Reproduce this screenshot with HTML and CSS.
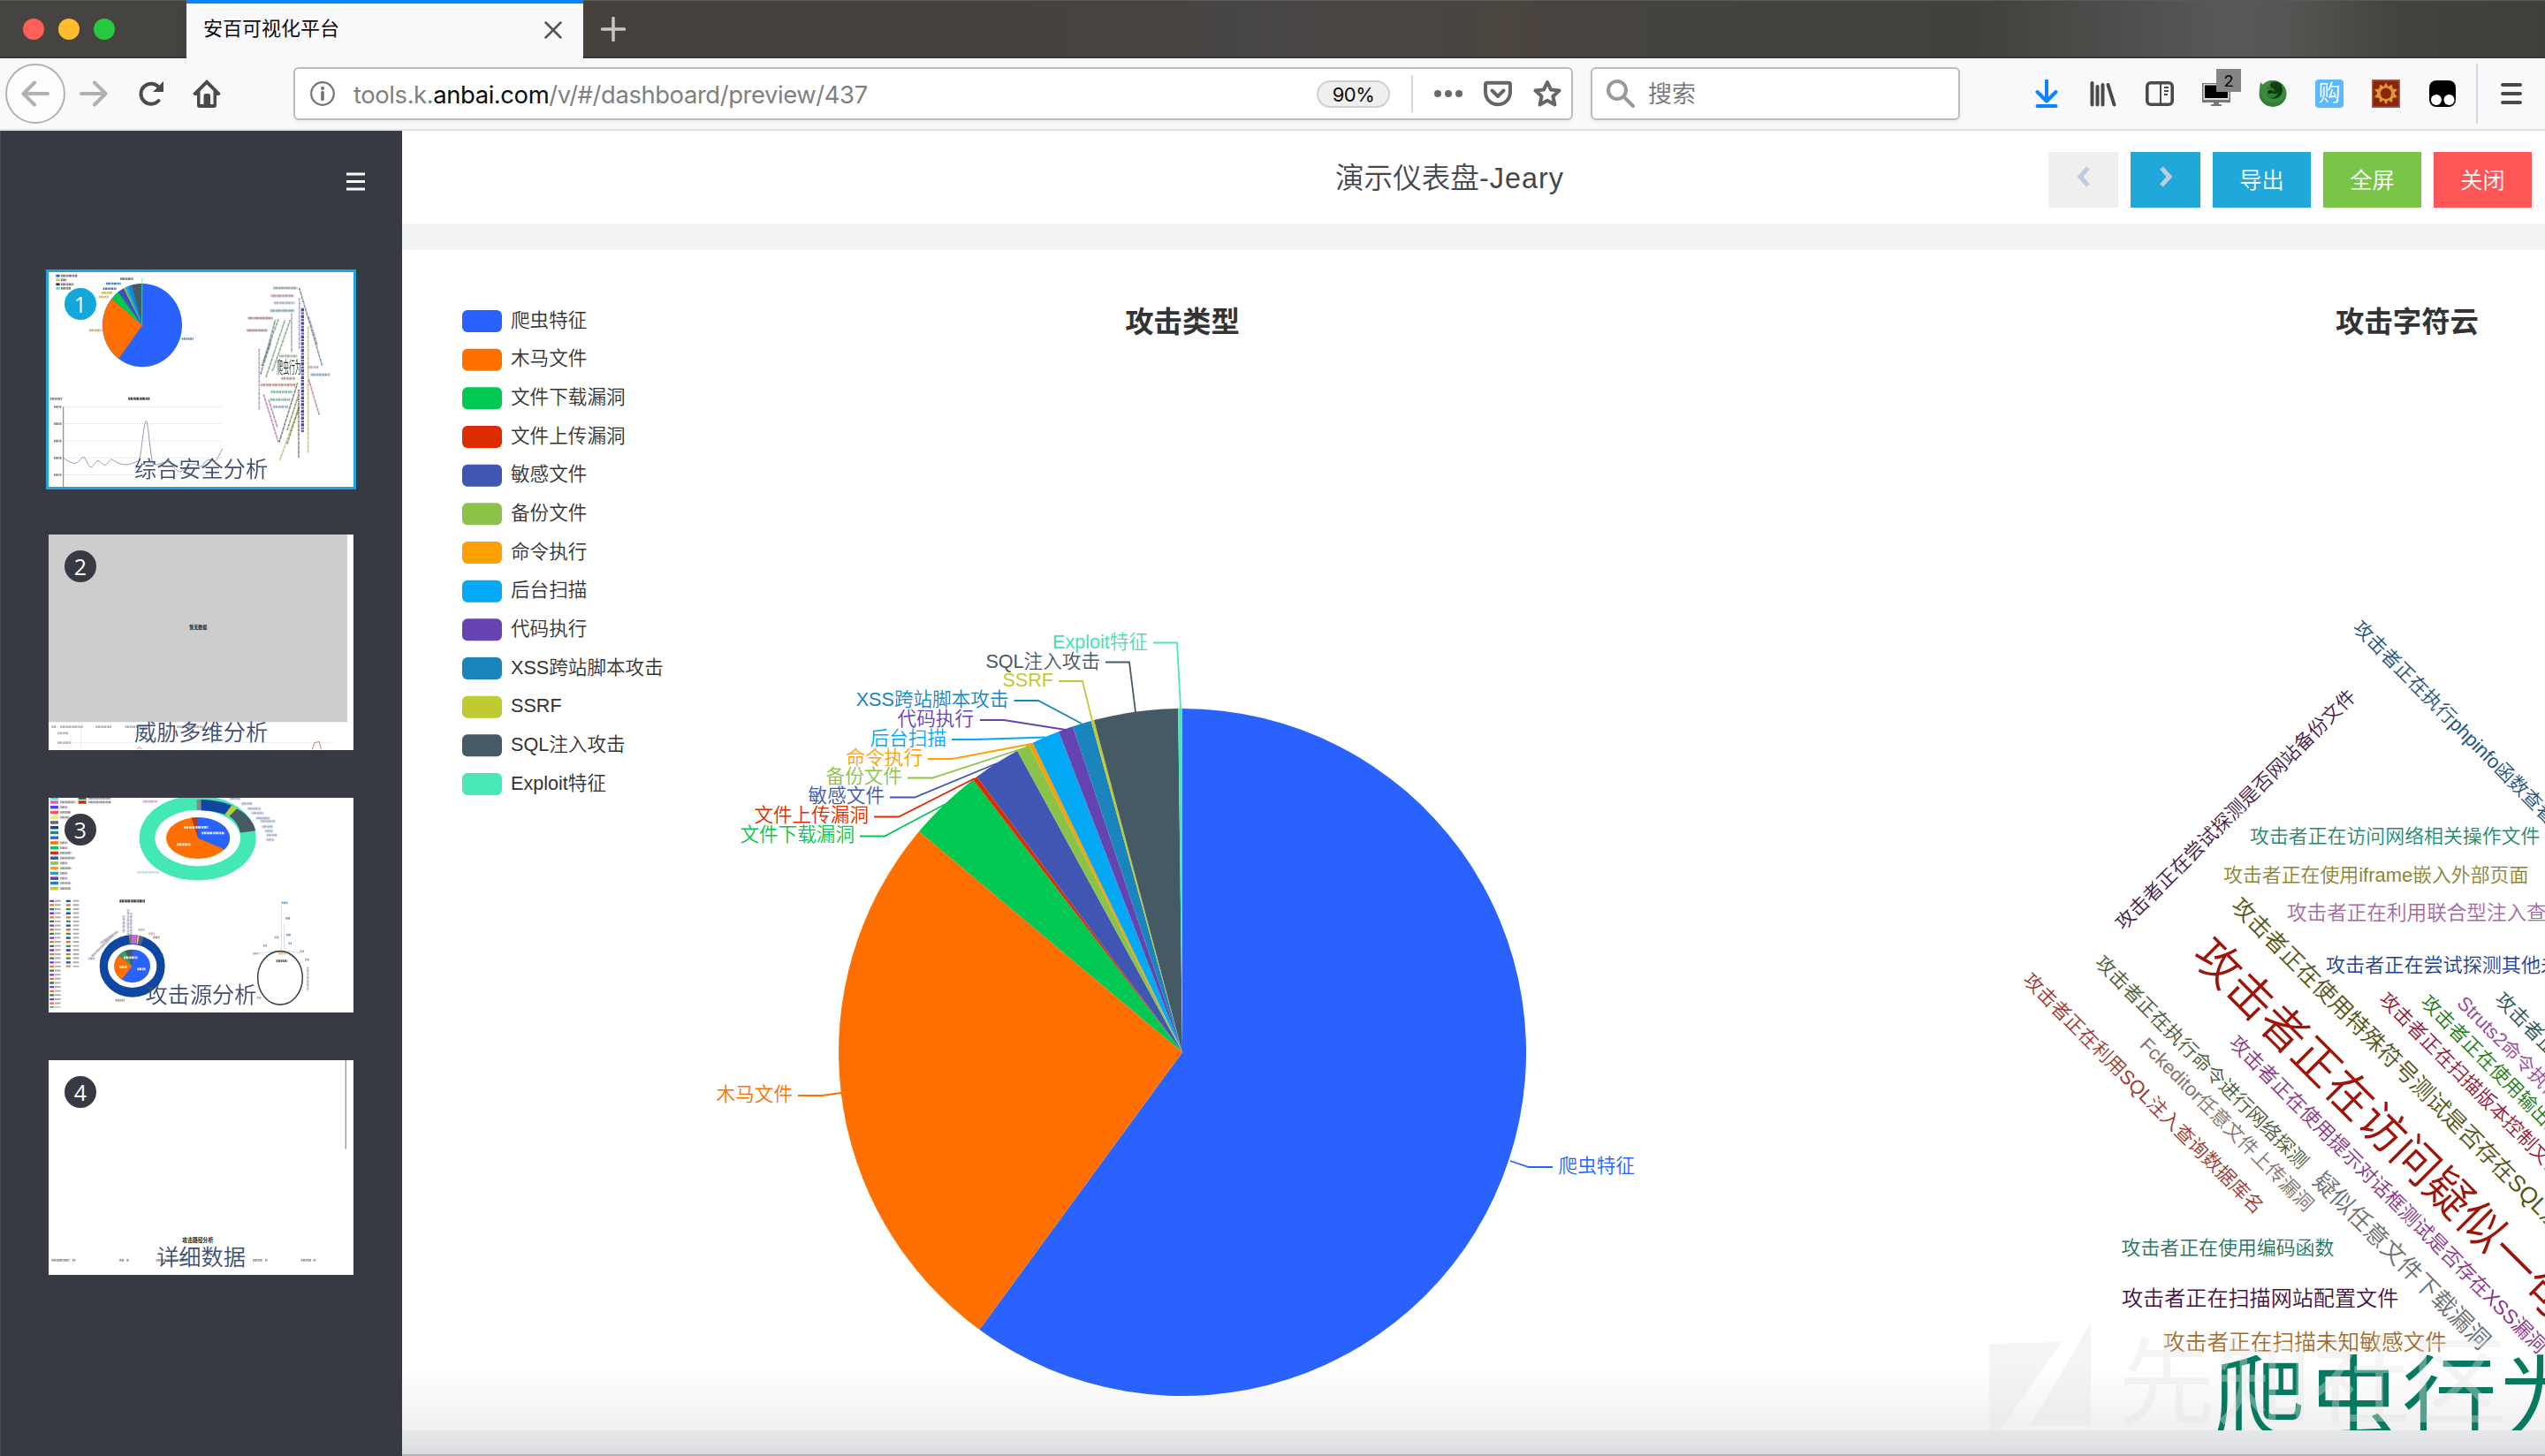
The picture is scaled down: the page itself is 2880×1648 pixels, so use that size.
FILE: index.html
```html
<!DOCTYPE html>
<html lang="zh-CN">
<head>
<meta charset="utf-8">
<title>安百可视化平台</title>
<link rel="stylesheet" href="styles.css">
</head>
<body>
<div class="window">
  <div class="tabbar">
    <div class="lights"><i class="red"></i><i class="yellow"></i><i class="green"></i></div>
    <div class="tab">
      <span class="tab-title">安百可视化平台</span>
      <svg class="tab-close" viewBox="0 0 20 20"><path d="M1.500 1.500L18.500 18.500M18.500 1.500L1.500 18.500"/></svg>
    </div>
    <svg class="new-tab" viewBox="0 0 28 28"><path d="M14 1.500V26.500M1.500 14H26.500"/></svg>
  </div>

  <div class="toolbar">
    <div class="back"><svg viewBox="0 0 32 32"><path d="M30 16H3M15 3.500L2.500 16L15 28.500"/></svg></div>
    <svg class="nav forward" viewBox="0 0 32 32"><path d="M2 16H29M17 3.500L29.500 16L17 28.500"/></svg>
    <svg class="nav reload" viewBox="0 0 32 32"><path d="M24.500 24A11.500 11.500 0 1 1 24.500 8.500L27 11"/><path class="solid" d="M30 2V14H18Z"/></svg>
    <svg class="nav home" viewBox="0 0 32 32"><path class="solid" fill-rule="evenodd" d="M16 0L31 15Q32.500 18 29 18H27V29Q27 32 24 32H8Q5 32 5 29V18H3Q-.5 18 1 15ZM16 5.500L8.500 13V28H12.500V18Q12.500 16 14.500 16H18Q20 16 20 18V28H23.500V13Z"/><circle class="solid" cx="17.300" cy="23" r="1.500"/></svg>
    <div class="urlbar">
      <svg class="info" viewBox="0 0 28 28"><circle cx="14" cy="14" r="12.800"/><path d="M14 12.500V20.500"/><circle class="dot" cx="14" cy="8" r="2"/></svg>
      <span class="url">tools.k.<b>anbai.com</b>/v/#/dashboard/preview/437</span>
      <span class="zoom">90%</span>
      <i class="url-sep"></i>
      <svg class="dots" viewBox="0 0 32 32"><circle cx="4" cy="16" r="4"/><circle cx="16" cy="16" r="4"/><circle cx="28" cy="16" r="4"/></svg>
      <svg class="pocket" viewBox="0 0 32 32"><path d="M4 3.800H28Q30 3.800 30 6V14C30 22 24 28.200 16 28.200S2 22 2 14V6Q2 3.800 4 3.800Z"/><path d="M9.500 12.500L16 19L22.500 12.500"/></svg>
      <svg class="star" viewBox="0 0 32 32"><path d="M16 3L20 11.600L29.500 12.600L22.400 19L24.500 28.600L16 23.800L7.500 28.600L9.600 19L2.500 12.600L12 11.600Z"/></svg>
    </div>
    <div class="search">
      <svg viewBox="0 0 32 32"><circle cx="12" cy="12" r="10"/><path d="M19.500 19.500L30 30"/></svg>
      <span>搜索</span>
    </div>
    <div class="extensions">
      <svg class="download" viewBox="0 0 32 32"><path d="M16 1.500V24M5.500 14L16 24.500L26.500 14M5.500 30H26.500"/></svg>
      <svg class="library" viewBox="0 0 32 32"><path d="M3.500 4V28.500M9.500 8V28.500M15.500 6V28.500M21.500 6L28.500 28.500"/></svg>
      <svg class="sidebar-icon" viewBox="0 0 32 32"><rect x="1.800" y="3.800" width="28.400" height="24.400" rx="4"/><path d="M17 4V28"/><path class="thin" d="M21 9H26M21 13H26M21 17H25"/></svg>
      <div class="monitor">
        <svg viewBox="0 0 32 32"><rect x="0" y="4" width="32" height="22" fill="#777"/><rect x="1.500" y="5" width="29" height="18" fill="#ddd"/><rect x="3" y="6.500" width="26" height="14.500" fill="#000"/><path d="M13 26H19V28H22V30H10V28H13Z" fill="#777"/></svg>
        <span class="badge">2</span>
      </div>
      <svg viewBox="0 0 32 32"><ellipse cx="16" cy="16" rx="15.500" ry="15" fill="#2f7f33"/><path d="M1 10L2 3L5 6Q9 1 16 1Q12 3 13 6Q9 8 8 11L13 12Q11 15 8 15Q9 21 15 22Q24 23 27 14Q28 9 26 5Q31 10 31 16Q28 25 19 26Q9 27 4 20Q0 15 1 10Z" fill="#3d8a3e"/><path d="M13 5Q18 0 25 5Q29 12 25 18Q20 23 14 21Q20 20 22 15Q17 18 14 14Q17 14 18 11Q15 10 13 8Z" fill="#123d14"/><path d="M10 13Q14 11 16 13Q15 16 11 16Z" fill="#0b260d"/></svg>
      <span class="gou">购</span>
      <svg viewBox="0 0 32 32"><rect x=".75" y=".75" width="30.500" height="30.500" fill="#8c240c" stroke="#a8604f" stroke-width="1.500"/><path d="M16 3.500L18.500 8L23 5.500L23.500 10.500L29 11L25.500 15.500L29 20L23.500 21L23 26L18.500 23.500L16 28.500L13.500 23.500L9 26L8.500 21L3 20L6.500 15.500L3 11L8.500 10.500L9 5.500L13.500 8Z" fill="#dd9838"/><circle cx="16" cy="15.800" r="6.200" fill="#8c240c"/></svg>
      <svg viewBox="0 0 32 32"><rect x="1" y="1" width="30" height="30" rx="8" fill="#000"/><circle cx="9" cy="23" r="6" fill="#fff"/><circle cx="23.500" cy="23" r="6" fill="#fff"/></svg>
    </div>
    <i class="bar-sep"></i>
    <svg class="menu" viewBox="0 0 24 24"><path d="M2 2H22M2 12H22M2 22H22"/></svg>
  </div>

  <div class="app">
    <aside class="side">
      <svg class="collapse" viewBox="0 0 21 21"><path d="M0 2H21M0 10.500H21M0 19H21"/></svg>
      <div class="thumbs">
        <div class="thumb active">
          <svg viewBox="165 73 1035 635" preserveAspectRatio="none">
            <g class="mini-legend"><path stroke="#2a5bd0" d="M190 84H203"/><path stroke="#bdc832" d="M190 96H203"/><path stroke="#333" d="M190 109H203"/><path stroke="#49e8b8" d="M190 121H203"/><path class="scribble" stroke="#666" d="M207 84H262M207 96H226M207 109H250M207 121H240M408 93H452"/><path stroke="#26a" class="scribble" d="M360 107H410M350 122H395"/><path stroke="#ca4" class="scribble" d="M345 134H380M335 146H368"/></g>
            <ellipse cx="483" cy="230" rx="135" ry="123" fill="#2962ff"/>
            <path fill="#ff6f00" d="M483 230L403 329A135 123 0 0 1 380 151Z"/>
            <path fill="#00c853" d="M483 230L380 151A135 123 0 0 1 401 132Z"/>
            <path fill="#3f51b5" d="M483 230L401 132A135 123 0 0 1 420 121Z"/>
            <path fill="#8bc34a" d="M483 230L420 121A135 123 0 0 1 427 118Z"/>
            <path fill="#03a9f4" d="M483 230L427 118A135 123 0 0 1 436 115Z"/>
            <path fill="#1a84bd" d="M483 230L436 115A135 123 0 0 1 448 111Z"/>
            <path fill="#455a64" d="M483 230L448 111A135 123 0 0 1 481 107Z"/>
            <path stroke="#49e8b8" stroke-width="2" d="M482 230V90"/>
            <path class="scribble" stroke="#c96" d="M303 245H345"/><path class="scribble" stroke="#57a" d="M617 270H658"/>
            <g class="grid"><path d="M215 471H752M215 521H752M215 572H752M215 622H752M215 672H752"/></g>
            <path fill="none" stroke="#444" stroke-width="2" d="M215 471V708"/>
            <path class="scribble" stroke="#777" d="M170 447H212M183 471H210M183 521H210M183 572H210M183 622H210M183 672H210"/>
            <path class="scribble bold" stroke="#333" d="M436 447H508"/>
            <path class="trend" d="M215 622C235 635 250 640 262 636C275 625 280 618 286 620C295 630 300 650 310 649C320 645 325 630 333 630C342 632 350 645 358 643C368 638 372 625 380 626C395 635 410 642 430 642C450 640 465 632 472 630C480 615 488 513 496 513C504 513 508 610 520 640C540 648 550 630 575 635C590 645 600 665 615 663C630 655 640 640 655 640C670 640 680 655 690 642C700 625 710 625 725 632C735 635 745 610 756 594"/>
            <g class="scribble">
              <path stroke="#666" d="M928 120H1010"/><path stroke="#a35b83" d="M920 143H998"/><path stroke="#789" d="M930 164H1000"/><path stroke="#478" d="M918 187H1000"/><path stroke="#934a70" d="M842 209H926M838 245H908"/><path stroke="#686" d="M948 321H1010"/><path stroke="#867" d="M955 387H1003"/><path stroke="#9a5b52" d="M886 406H1004"/><path stroke="#497" d="M920 427H992M918 450H986"/><path stroke="#57a" d="M928 471H978M1055 376H1120"/><path stroke="#a7a" d="M1046 354H1083"/>
            </g>
            <g class="slant">
              <path stroke="#467" d="M1016 120L1094 350M885 375L935 213M893 350L920 280"/><path stroke="#585" d="M888 350L945 213M903 383L968 213M925 365L985 215"/><path stroke="#87a" d="M880 300V480M990 195V310M1016 150V300M1048 205L1078 290"/><path stroke="#a59" d="M895 435L945 575M912 450L942 532M1048 390L1084 495"/><path stroke="#aa5" d="M950 628L1016 470M1046 235V608"/><path stroke="#545" d="M1014 420V620M948 575L1010 400"/><path stroke="#573" d="M975 580L1016 470M975 540L1012 440"/>
              <path stroke="#3a2f95" stroke-width="9" d="M1027 180V545"/>
            </g>
            <text x="940" y="374" font-size="50" fill="#223428" textLength="82" lengthAdjust="spacingAndGlyphs">爬虫行为</text>
          </svg>
          <b class="num">1</b><span class="cap">综合安全分析</span>
        </div>
        <div class="thumb">
          <svg viewBox="165 849 1035 635" preserveAspectRatio="none">
            <rect x="165" y="849" width="1014" height="554" fill="#cdcdcd"/>
            <text x="643" y="1129" font-size="15" font-weight="bold" fill="#222">暂无数据</text>
            <g class="scribble"><path stroke="#999" d="M175 1417H192M205 1417H282M325 1417H378M425 1417H500M196 1436H232M195 1464H240M600 1417H690"/></g>
            <path stroke="#ccc" fill="none" d="M240 1436V1484M275 1412V1484M240 1464H1132"/>
            <path stroke="#c44" stroke-width="2" fill="none" d="M466 1484L474 1477L482 1484M1060 1484L1068 1464L1084 1461L1090 1484"/>
          </svg>
          <b class="num">2</b><span class="cap">威胁多维分析</span>
        </div>
        <div class="thumb">
          <svg viewBox="165 60 1035 635" preserveAspectRatio="none">
            <g class="swatches"><path stroke="#49e8b8" d="M171 61H198"/><path stroke="#e85bd0" d="M171 73H198"/><path stroke="#5a3cff" d="M171 88H198"/><path stroke="#ff5050" d="M171 103H198"/><path stroke="#ffe070" d="M171 118H198"/><path stroke="#566b76" d="M171 133H198"/><path stroke="#0d47a1" d="M171 148H198"/><path stroke="#009688" d="M171 163H198"/><path stroke="#2962ff" d="M171 178H198"/><path stroke="#ff6f00" d="M171 193H198"/><path stroke="#00c853" d="M171 208H198"/><path stroke="#dd2c00" d="M171 223H198"/><path stroke="#3f51b5" d="M171 238H198"/><path stroke="#8bc34a" d="M171 253H198"/><path stroke="#ffa000" d="M171 268H198"/><path stroke="#03a9f4" d="M171 283H198"/><path stroke="#673ab7" d="M171 298H198"/><path stroke="#1a84bd" d="M171 312H198"/><path stroke="#c0ca33" d="M171 328H198"/><path stroke="#1b7a3a" d="M266 61H293"/><path stroke="#c03010" d="M266 73H293"/></g>
            <g class="scribble"><path stroke="#666" d="M204 73H255M300 73H378M300 61H375M204 88H228M204 103H240M204 118H235M204 193H228M204 208H228M204 223H242M204 238H254M204 253H228M204 268H242M204 283H228M204 298H228M204 312H240M204 328H240"/><path stroke="#b6c" d="M486 71H535"/><path stroke="#9cb" d="M465 280H540"/><path stroke="#78a" d="M780 62H815M820 77H855M840 92H885M855 105H895M870 120H915M885 129H935M890 145H925M900 158H925M905 170H940M905 184H930"/></g>
            <ellipse cx="671" cy="179" rx="171" ry="98" fill="none" stroke="#43e8b5" stroke-width="54"/>
            <ellipse cx="671" cy="179" rx="145" ry="83" fill="#fff"/>
            <path fill="#0d47a1" d="M682 65Q740 66 787 82L764 109Q725 98 682 97Z"/><path fill="#c0ca33" d="M787 82L804 92L779 114L764 109Z"/><path fill="#455a64" d="M804 92Q855 115 868 157L816 163Q808 132 779 114Z"/><path fill="#888" d="M668 65H682V97H668Z"/>
            <ellipse cx="672" cy="179" rx="108" ry="61" fill="#ff6f00"/><path fill="#2962ff" d="M672 179V118A108 61 0 0 1 762 213Z"/><path fill="#b53b20" d="M672 179L650 119L672 118Z"/>
            <path class="scribble" stroke="#fff" d="M625 147H706M600 198H648M685 164H762"/>
            <path class="scribble bold" stroke="#333" d="M406 365H492"/>
            <g class="column"><path stroke="#7c3ac0" d="M176 362V680"/><path stroke="#1d4f9e" d="M232 362V560"/></g>
            <g class="column"><path stroke="#e07a2c" d="M176 374V680"/><path stroke="#d97718" d="M232 374V560"/></g>
            <g class="column"><path stroke="#2d7a57" d="M176 386V680"/><path stroke="#38924a" d="M232 386V560"/></g>
            <g class="column-text"><path d="M196 362V680"/><path d="M258 362V560"/></g>
            <ellipse cx="449" cy="557" rx="97" ry="78" fill="none" stroke="#0d47a1" stroke-width="28"/>
            <path fill="#777" d="M437 466L448 465V491H440Z"/><path fill="#d860d8" d="M447 465L466 466L462 491H447Z"/><path fill="#ffc070" d="M467 467L474 468L468 492H463Z"/><path fill="#567" d="M474 468L488 472L478 496L468 492Z"/>
            <ellipse cx="449" cy="557" rx="61" ry="49" fill="#2962ff"/><path fill="#ff6f00" d="M449 557L413 597A61 49 0 0 1 403 525Z"/><path fill="#3a9a58" d="M449 557L403 525A61 49 0 0 1 425 512Z"/><path fill="#455a64" d="M449 557L425 512L449 508Z"/>
            <path class="scribble" stroke="#fff" d="M420 532H468M405 560H432M466 566H495"/>
            <g class="scribble"><path stroke="#88a" d="M435 390V465M445 400V465M420 408V458M385 465L310 530M400 455L340 490M300 535H322"/><path stroke="#c8a" d="M470 450H492M505 461H525"/><path stroke="#777" d="M392 658H422M520 472H542"/></g>
            <ellipse cx="951" cy="592" rx="76" ry="79" fill="none" stroke="#3d4448" stroke-width="4.500"/>
            <g class="scribble"><path stroke="#333" d="M938 542H976"/><path stroke="#58a" d="M956 370H978M970 416H986M972 465H988M980 490H990"/><path stroke="#999" d="M858 520H880M893 497H906M932 472H948M1018 514H1034M873 650H886M1035 538H1050M1045 560V630"/><path stroke="#e9a050" d="M945 520H970"/></g>
            <path fill="none" stroke="#999" d="M955 375V510M965 430V510M1020 520L975 512M880 520L940 512"/>
          </svg>
          <b class="num">3</b><span class="cap">攻击源分析</span>
        </div>
        <div class="thumb">
          <svg viewBox="165 836 1035 635" preserveAspectRatio="none">
            <path stroke="#999" stroke-width="4" d="M1174 836V1098"/><path stroke="#eee" d="M1159 836V1100"/>
            <text x="619" y="1373" font-size="17.500" font-weight="bold" fill="#222">攻击路径分析</text>
            <g class="scribble"><path stroke="#777" d="M175 1427H236M246 1427H256M406 1427H420M430 1427H438M530 1427H640M858 1427H890M900 1427H908M1022 1427H1056M1064 1427H1072"/></g>
          </svg>
          <b class="num">4</b><span class="cap">详细数据</span>
        </div>
      </div>
    </aside>

    <main class="main">
      <header class="head">
        <h1>演示仪表盘<span>-Jeary</span></h1>
        <div class="actions">
          <button class="btn prev"><svg viewBox="0 0 16 24"><path d="M13 2L4 12L13 22"/></svg></button>
          <button class="btn next"><svg viewBox="0 0 16 24"><path d="M3 2L12 12L3 22"/></svg></button>
          <button class="btn wide">导出</button>
          <button class="btn wide full">全屏</button>
          <button class="btn wide close">关闭</button>
        </div>
      </header>
      <section class="board">
        <svg class="chart pie" viewBox="455 283 1766 1336">
          <text class="title" x="1338" y="375.500">攻击类型</text>
          <g class="legend">
            <rect x="523" y="351" width="45" height="25" rx="6" fill="#2962ff"/><text x="578" y="369.500">爬虫特征</text>
            <rect x="523" y="394.700" width="45" height="25" rx="6" fill="#ff6f00"/><text x="578" y="413">木马文件</text>
            <rect x="523" y="438.300" width="45" height="25" rx="6" fill="#00c853"/><text x="578" y="456.700">文件下载漏洞</text>
            <rect x="523" y="482" width="45" height="25" rx="6" fill="#dd2c00"/><text x="578" y="500.500">文件上传漏洞</text>
            <rect x="523" y="525.700" width="45" height="25" rx="6" fill="#3f57b3"/><text x="578" y="544">敏感文件</text>
            <rect x="523" y="569.300" width="45" height="25" rx="6" fill="#8bc34a"/><text x="578" y="587.700">备份文件</text>
            <rect x="523" y="613" width="45" height="25" rx="6" fill="#ffa000"/><text x="578" y="631.500">命令执行</text>
            <rect x="523" y="656.700" width="45" height="25" rx="6" fill="#03a9f4"/><text x="578" y="675">后台扫描</text>
            <rect x="523" y="700.300" width="45" height="25" rx="6" fill="#6543b1"/><text x="578" y="718.700">代码执行</text>
            <rect x="523" y="744" width="45" height="25" rx="6" fill="#1a84bd"/><text x="578" y="762.500">XSS跨站脚本攻击</text>
            <rect x="523" y="787.700" width="45" height="25" rx="6" fill="#c0ca33"/><text x="578" y="806">SSRF</text>
            <rect x="523" y="831.300" width="45" height="25" rx="6" fill="#455a64"/><text x="578" y="849.700">SQL注入攻击</text>
            <rect x="523" y="875" width="45" height="25" rx="6" fill="#49e8b8"/><text x="578" y="893.500">Exploit特征</text>
          </g>
          <g class="slices">
            <path fill="#2962ff" d="M1338 1191V802A389 389 0 1 1 1108.300 1504.900Z"/>
            <path fill="#ff6f00" d="M1338 1191L1108.300 1504.900A389 389 0 0 1 1040 941Z"/>
            <path fill="#00c853" d="M1338 1191L1040 941A389 389 0 0 1 1101.200 882.400Z"/>
            <path fill="#dd2c00" d="M1338 1191L1101.200 882.400A389 389 0 0 1 1105.500 879.100Z"/>
            <path fill="#3f57b3" d="M1338 1191L1105.500 879.100A389 389 0 0 1 1151.200 849.800Z"/>
            <path fill="#8bc34a" d="M1338 1191L1151.200 849.800A389 389 0 0 1 1164.400 842.900Z"/>
            <path fill="#ffa000" d="M1338 1191L1164.400 842.900A389 389 0 0 1 1168.700 840.800Z"/>
            <path fill="#03a9f4" d="M1338 1191L1168.700 840.800A389 389 0 0 1 1198 828.100Z"/>
            <path fill="#6543b1" d="M1338 1191L1198 828.100A389 389 0 0 1 1213.900 822.300Z"/>
            <path fill="#1a84bd" d="M1338 1191L1213.900 822.300A389 389 0 0 1 1234.700 816Z"/>
            <path fill="#c0ca33" d="M1338 1191L1234.700 816A389 389 0 0 1 1238 815.100Z"/>
            <path fill="#455a64" d="M1338 1191L1238 815.100A389 389 0 0 1 1333.200 802Z"/>
            <path fill="#49e8b8" d="M1338 1191L1333.200 802A389 389 0 0 1 1338 802Z"/>
          </g>
          <g class="lines">
            <path stroke="#49e8b8" d="M1305 727.500H1332L1336 802"/>
            <path stroke="#455a64" d="M1251 749.500H1278L1285 806"/>
            <path stroke="#c0ca33" d="M1198 771H1225L1236 816"/>
            <path stroke="#1a84bd" d="M1147.500 793H1175L1224 819"/>
            <path stroke="#6543b1" d="M1109 815H1136L1206 826"/>
            <path stroke="#03a9f4" d="M1077 837H1104L1183 834.500"/>
            <path stroke="#ffa000" d="M1050 859H1077.500L1167 842"/>
            <path stroke="#8bc34a" d="M1027 880.500H1055L1158 847"/>
            <path stroke="#3f57b3" d="M1007 902.500H1035L1128 864"/>
            <path stroke="#dd2c00" d="M989 924.500H1017L1103 881"/>
            <path stroke="#00c853" d="M973 946.500H1001L1069 910.500"/>
            <path stroke="#ff6f00" d="M903 1240H930L952 1237"/>
            <path stroke="#2962ff" d="M1757 1321H1730L1709 1314"/>
          </g>
          <g class="labels">
            <text x="1299" y="733.500" fill="#49e0b2">Exploit特征</text>
            <text x="1245" y="755.500" fill="#455a64">SQL注入攻击</text>
            <text x="1192" y="777" fill="#c0ca33">SSRF</text>
            <text x="1141.500" y="799" fill="#1a84bd">XSS跨站脚本攻击</text>
            <text x="1102" y="820.500" fill="#6543b1">代码执行</text>
            <text x="1071" y="842.500" fill="#03a9f4">后台扫描</text>
            <text x="1044" y="864.500" fill="#ffa000">命令执行</text>
            <text x="1021" y="886" fill="#8bc34a">备份文件</text>
            <text x="1001" y="908" fill="#3f57b3">敏感文件</text>
            <text x="983" y="930" fill="#dd2c00">文件上传漏洞</text>
            <text x="967" y="952" fill="#00c853">文件下载漏洞</text>
            <text x="897" y="1246" fill="#ff6f00">木马文件</text>
            <text x="1850" y="1327" fill="#2962ff">爬虫特征</text>
          </g>
        </svg>
        <svg class="chart cloud" viewBox="2221 283 659 1336">
          <text class="title" x="2724" y="375.500">攻击字符云</text>
          <g class="flat">
            <text x="2546" y="946.500" dy=".32em" font-size="21.900" fill="#1f8a6c">攻击者正在访问网络相关操作文件</text>
            <text x="2516" y="990.500" dy=".32em" font-size="21.900" fill="#8a8530">攻击者正在使用iframe嵌入外部页面</text>
            <text x="2588" y="1034" dy=".32em" font-size="22.600" fill="#a468a4">攻击者正在利用联合型注入查询</text>
            <text x="2632" y="1092.500" dy=".32em" font-size="22.100" fill="#1a4290">攻击者正在尝试探测其他未知</text>
            <text x="2400.500" y="1413" dy=".32em" font-size="21.900" fill="#24755c">攻击者正在使用编码函数</text>
            <text x="2401" y="1470" dy=".32em" font-size="24.100" fill="#46103c">攻击者正在扫描网站配置文件</text>
            <text x="2448" y="1520.500" dy=".32em" font-size="24.700" fill="#a36c30">攻击者正在扫描未知敏感文件</text>
            <text x="2502" y="1584" dy=".37em" font-size="108" fill="#067a60">爬虫行为</text>
          </g>
          <g class="tilted">
            <text transform="translate(2405.500 1041) rotate(-45)" x="-.5em" dy=".34em" font-size="22" fill="#451a4a">攻击者正在尝试探测是否网站备份文件</text>
            <text transform="translate(2674.400 714.300) rotate(45)" x="-.5em" dy=".34em" font-size="22" fill="#25547f">攻击者正在执行phpinfo函数查看</text>
            <text transform="translate(2301 1113) rotate(45)" x="-.5em" dy=".34em" font-size="22" fill="#a03a32">攻击者正在利用SQL注入查询数据库名</text>
            <text transform="translate(2382.600 1093.300) rotate(45)" x="-.5em" dy=".34em" font-size="22" fill="#4c5c36">攻击者正在执行命令进行网络探测</text>
            <text transform="translate(2431 1184) rotate(45)" x="-.35em" dy=".34em" font-size="22" fill="#86736c">Fckeditor任意文件上传漏洞</text>
            <text transform="translate(2510 1089.500) rotate(45)" x="-.5em" dy=".36em" font-size="52.800" fill="#9e1409">攻击者正在访问疑似一句话木马</text>
            <text transform="translate(2538.800 1030) rotate(45)" x="-.5em" dy=".34em" font-size="26" fill="#555414">攻击者正在使用特殊符号测试是否存在SQL注入</text>
            <text transform="translate(2534.500 1184) rotate(45)" x="-.5em" dy=".34em" font-size="22.600" fill="#8c3387">攻击者正在使用提示对话框测试是否存在XSS漏洞</text>
            <text transform="translate(2632 1341) rotate(45)" x="-.5em" dy=".35em" font-size="27" fill="#6a7074">疑似任意文件下载漏洞</text>
            <text transform="translate(2704 1135) rotate(45)" x="-.5em" dy=".34em" font-size="22" fill="#981636">攻击者正在扫描版本控制文件</text>
            <text transform="translate(2751 1138) rotate(45)" x="-.5em" dy=".34em" font-size="22" fill="#1a7d14">攻击者正在使用输出函数</text>
            <text transform="translate(2790 1137) rotate(45)" x="-.35em" dy=".34em" font-size="22" fill="#9c4a9c">Struts2命令执行漏洞</text>
            <text transform="translate(2835 1135) rotate(45)" x="-.5em" dy=".34em" font-size="22.500" fill="#2d5852">攻击者正在扫描</text>
          </g>
        </svg>
      </section>
      <div class="foot"></div>
    </main>
  </div>
  <div class="watermark">
    <svg viewBox="0 0 116 140"><path d="M0 24L82 22L1 138Z M115 0V116H47Z"/></svg>
    <span>先知社区</span>
  </div>
</div>
</body>
</html>
```
FILE: styles.css
```css
* { box-sizing: border-box; }
body { margin: 0; font-family: "Liberation Sans", "Noto Sans CJK SC", sans-serif; font-weight: 350; }
svg { display: block; flex: none; }
.window { position: relative; width: 2880px; height: 1648px; overflow: hidden; display: flex; flex-direction: column; background: #fff; }

/* tab strip */
.tabbar { height: 66px; display: flex; align-items: center; border-top: 1px solid #5a5a58; border-bottom: 2px solid #373633; background: linear-gradient(90deg, #454440 0, #45413d 1100px, #484645 1450px, #4b443f 1710px, #444340 1900px, #42413e 2240px, #585857 2520px, #555553 2590px, #43423e 2720px, #403f3b 100%); }
.lights { width: 211px; padding-left: 26px; display: flex; gap: 16px; }
.lights i { width: 24px; height: 24px; border-radius: 50%; }
.red { background: #ff5f57; }
.yellow { background: #ffbd2e; }
.green { background: #28c940; }
.tab { width: 449px; height: 67px; margin-top: -1px; padding: 0 24px 0 19px; display: flex; align-items: center; justify-content: space-between; background: #f9f9fb; border-top: 4px solid #0a84ff; align-self: flex-start; }
.tab-title { font-size: 22px; line-height: 32px; font-weight: 400; margin-top: -5px; color: #0c0c0d; }
.tab-close { width: 20px; height: 20px; margin-top: -3px; }
.tab-close path { fill: none; stroke: #555; stroke-width: 2.5; stroke-linecap: round; }
.new-tab { width: 28px; height: 28px; margin-left: 20px; }
.new-tab path { stroke: #c8c7c5; stroke-width: 3.5; stroke-linecap: round; }

/* navigation bar */
.toolbar { height: 82px; flex: none; padding: 0 26px 0 6px; display: flex; align-items: center; background: #f9f9fb; border-bottom: 2px solid #e0e0e1; }
.toolbar svg { width: 32px; height: 32px; }
.back { width: 68px; height: 68px; border: 2px solid #b1b1b3; border-radius: 50%; background: #fdfdfe; display: flex; align-items: center; justify-content: center; }
.back path, .forward path { fill: none; stroke: #b1b1b3; stroke-width: 4; stroke-linecap: round; stroke-linejoin: round; }
.forward { margin-left: 16px; }
.reload { margin-left: 33px; }
.reload path { fill: none; stroke: #4a4a4c; stroke-width: 4; stroke-linecap: round; }
.home { margin-left: 31px; }
.nav .solid { fill: #4a4a4c; stroke: none; }
.urlbar, .search { height: 60px; display: flex; align-items: center; background: #fff; border: 2px solid #bcbcbe; border-radius: 6px; box-shadow: 0 2px 4px rgba(0, 0, 0, .06); }
.urlbar { width: 1448px; margin-left: 82px; padding: 0 11px 0 17px; }
.urlbar .info { width: 28px; height: 28px; }
.info circle, .info path { fill: none; stroke: #737373; stroke-width: 2.2; }
.info path { stroke-width: 3.6; stroke-linecap: round; }
.info .dot { fill: #737373; stroke: none; }
.url { margin: 2px 0 0 21px; font: 27.4px "Inter", "Liberation Sans", sans-serif; letter-spacing: -.4px; color: #808080; flex: 1; white-space: nowrap; }
.url b { font-weight: 400; color: #0c0c0d; }
.zoom { width: 83px; height: 31px; border: 2px solid #d0d0d2; border-radius: 16px; background: #efefef; font: 22px/28px "Inter", sans-serif; letter-spacing: -.5px; text-align: center; color: #0c0c0d; }
.url-sep { width: 2px; height: 42px; margin: 0 24px; background: #d7d7db; }
.dots circle { fill: #6a6a6c; }
.pocket { margin-left: 24px; }
.pocket path, .star path { fill: none; stroke: #666668; stroke-width: 4; stroke-linecap: round; stroke-linejoin: round; }
.star { margin-left: 24px; }
.search { width: 418px; margin-left: 20px; padding-left: 16px; font-size: 27px; color: #757575; }
.search circle, .search path { fill: none; stroke: #999; stroke-width: 4; stroke-linecap: round; }
.search span { margin: 2px 0 0 15px; line-height: 40px; }
.extensions { margin-left: 82px; display: flex; gap: 32px; }
.download path { fill: none; stroke: #0a84ff; stroke-width: 4; stroke-linecap: round; stroke-linejoin: round; }
.library path { stroke: #4a4a4c; stroke-width: 4; stroke-linecap: round; }
.sidebar-icon rect, .sidebar-icon path { fill: none; stroke: #4a4a4c; stroke-width: 3.6; }
.sidebar-icon path { stroke-width: 2; }
.monitor { position: relative; width: 32px; }
.badge { position: absolute; left: 16px; top: -12px; width: 28px; height: 26px; background: #858585; color: #000; font: 19px/27px "Roboto", sans-serif; text-align: center; }
.gou { width: 32px; height: 32px; border-radius: 4px; background: #5cb8ff; color: #fff; font-size: 25px; line-height: 31px; text-align: center; }
.bar-sep { width: 2px; height: 68px; margin-left: 22px; background: #d7d7db; }
.toolbar .menu { width: 24px; height: 24px; margin-left: auto; }
.menu path { stroke: #4a4a4c; stroke-width: 4; stroke-linecap: round; }

/* page */
.app { flex: 1; min-height: 0; display: flex; }
.side { width: 455px; flex: none; background: #373a42; border-left: 1px solid #4b4e56; }
.collapse { width: 21px; height: 21px; margin: 47px 0 0 391px; }
.collapse path { stroke: #fff; stroke-width: 3; }
.thumbs { margin: 92px 0 0 54px; display: flex; flex-direction: column; gap: 54px; }
.thumb { position: relative; width: 345px; height: 243.3px; background: #fff; }
.thumb.active { outline: 3px solid #20a5d8; }
.thumb > svg { width: 345px; height: 243.3px; overflow: hidden; }
.num { position: absolute; left: 18px; top: 18px; width: 36px; height: 36px; border-radius: 50%; background: #373a42; color: #fff; font: 25px/36px "Open Sans", sans-serif; text-align: center; }
.active .num { background: #12a8dc; }
.cap { position: absolute; left: 0; right: 0; bottom: 0; height: 38px; line-height: 36px; font-size: 25.2px; text-align: center; color: #3f4d72; }
.scribble, .scribble path { fill: none; stroke-width: 7; stroke-dasharray: 5 1.5 8 2 3 1; opacity: .85; }
.scribble.bold { stroke-width: 8; opacity: .9; }
.mini-legend path:not(.scribble) { stroke-width: 7; }
.swatches path { stroke-width: 9; }
.slant path { fill: none; stroke-width: 5; stroke-dasharray: 6 2 3 2; opacity: .8; }
.slant path:last-child { stroke-width: 10; stroke-dasharray: 9 3 5 3; opacity: .9; }
.grid path { stroke: #e2e2e2; stroke-width: 2; }
.trend { fill: none; stroke: #6a72a8; stroke-width: 2; }
.column path, .column-text path { fill: none; stroke-width: 15; stroke-dasharray: 6 30.3; }
.column-text path { stroke: #8a8a8a; stroke-width: 20; stroke-dasharray: 5 7.1; opacity: .7; }

.main { flex: 1; min-width: 0; display: flex; flex-direction: column; background: #f2f3f5; }
.head { height: 105px; flex: none; padding-right: 15px; display: flex; align-items: center; background: #fff; }
.head h1 { flex: 1; margin: 3px 0 0 1056px; font-size: 32.6px; font-weight: 350; line-height: 48px; color: #45474d; white-space: nowrap; }
.head h1 span { font-size: 32.4px; letter-spacing: 1px; }
.actions { display: flex; gap: 14px; margin-top: 6px; }
.btn { width: 79px; height: 63px; padding: 0 0 3px; border: 0; display: flex; align-items: center; justify-content: center; background: #20a8da; color: #fff; font: 350 25.2px "Liberation Sans", "Noto Sans CJK SC", sans-serif; }
.btn svg { width: 16px; height: 24px; margin-top: -4px; }
.btn path { fill: none; stroke: #bfcbe0; stroke-width: 5; }
.wide { width: 111px; }
.prev { background: #efefef; }
.full { background: #7ac548; }
.close { background: #ff5555; }
.board { height: 1336px; flex: none; margin-top: 30px; display: flex; overflow: hidden; background: linear-gradient(#fff 1265px, #f0f0f0 100%); }
.chart { height: 1336px; overflow: hidden; }
.pie { width: 1766px; }
.cloud { width: 659px; }
.title { font-size: 32.4px; font-weight: 700; text-anchor: middle; fill: #333; }
.legend text { font-size: 21.6px; fill: #333; }
.lines path { fill: none; stroke-width: 1.8; }
.labels text { font-size: 21.6px; text-anchor: end; }
.foot { flex: 1; background: linear-gradient(#e6e7e9, #dcdde0); border-bottom: 2px solid #b4b4b6; }
.watermark { position: absolute; left: 2251px; top: 1497px; display: flex; color: rgba(225, 225, 225, .38); font-size: 110px; font-weight: 400; line-height: 138px; white-space: nowrap; }
.watermark svg { width: 116px; height: 140px; fill: rgba(225, 225, 225, .38); }
.watermark span { margin-left: 30px; }
```
